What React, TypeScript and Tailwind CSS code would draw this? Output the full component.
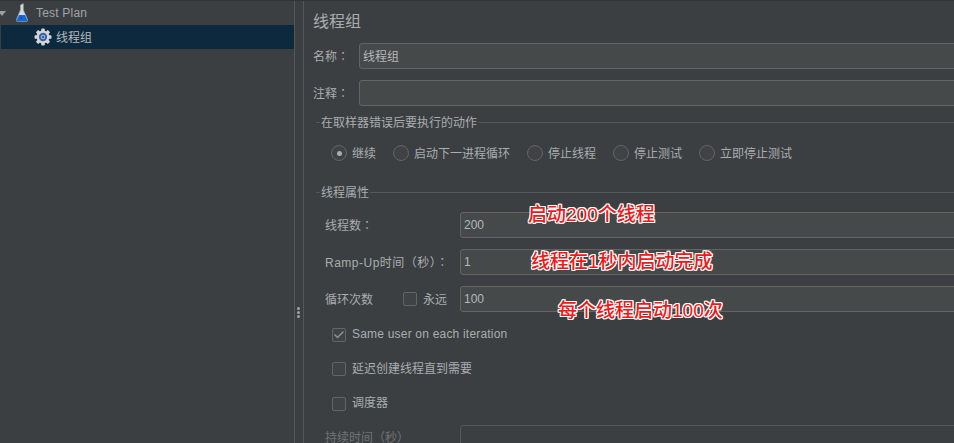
import React from "react";
import { Check } from "lucide-react";

const FONT = "font-['Liberation_Sans','Noto_Sans_CJK_SC',sans-serif]";

const FlaskIcon = () => (
  <svg width="14" height="20" viewBox="0 0 14 20" className="shrink-0">
    <path d="M5.4 2 L8.4 0.5 L8.4 7 L12.6 16.5 Q13.2 18.6 11.2 18.6 L2.8 18.6 Q0.8 18.6 1.4 16.5 L5.4 7 Z" fill="#d5dbe2" stroke="#8d96a0" strokeWidth="0.6" />
    <path d="M4 12 L10 12 L12.3 17 Q12.6 18.3 11.2 18.3 L2.8 18.3 Q1.4 18.3 1.7 17 Z" fill="#1468d8" />
    <rect x="5.6" y="14" width="1.5" height="2" fill="#0b3f8f" />
  </svg>
);

const GearIcon = () => (
  <svg width="18" height="18" viewBox="0 0 20 20" className="shrink-0">
    <g fill="#d4d6d8">
      <circle cx="10" cy="10" r="7.2" />
      <rect x="8" y="0.6" width="4" height="18.8" rx="1" />
      <rect x="0.6" y="8" width="18.8" height="4" rx="1" />
      <rect x="8" y="0.6" width="4" height="18.8" rx="1" transform="rotate(45 10 10)" />
      <rect x="8" y="0.6" width="4" height="18.8" rx="1" transform="rotate(-45 10 10)" />
    </g>
    <circle cx="10" cy="10" r="4.6" fill="#3d5f9e" />
    <circle cx="10" cy="10" r="2.6" fill="#8fb0e6" />
    <circle cx="10" cy="10" r="1.2" fill="#2c4a85" />
  </svg>
);

// the full-width colon sits in the middle of its cell in the TC face
const Colon = () => <span className="font-['Noto_Sans_CJK_TC',sans-serif]">：</span>;

const Input = ({ value, cjk }: { value?: string; cjk?: boolean }) => (
  <div className="shrink-0 w-[700px] h-[26px] bg-[#45494a] border border-[#646464] rounded-[3px] flex items-center px-[3px] text-[12px] text-[#b4b8bb]">
    <span className={cjk ? "pt-[1px]" : ""}>{value}</span>
  </div>
);

const Radio = ({ label, checked, className }: { label: string; checked?: boolean; className: string }) => (
  <div className={`flex items-center gap-[5px] ${className}`}>
    <span className="w-[16px] h-[16px] rounded-full border border-[#646464] bg-[#3f4345] flex items-center justify-center">
      {checked && <span className="w-[5px] h-[5px] rounded-full bg-[#a9adb0]" />}
    </span>
    <span className="pt-[1px]">{label}</span>
  </div>
);

const CheckBox = ({ checked }: { checked?: boolean }) => (
  <span className="w-[14px] h-[14px] shrink-0 rounded-[2px] border border-[#646464] bg-[#3f4345] flex items-center justify-center">
    {checked && <Check className="w-[12px] h-[12px] text-[#8f9396]" strokeWidth={3} />}
  </span>
);

const GroupTitle = ({ title }: { title: string }) => (
  <div className="flex items-center pl-[3px] h-[16px]">
    <span className="border-t border-[#55585a] w-[4px]" />
    <span className="px-[1px] pt-[1px] h-[16px] leading-[16px]">{title}</span>
    <span className="flex-1 border-t border-[#55585a]" />
  </div>
);

const Note = ({ text, className }: { text: string; className: string }) => (
  <span className={`absolute font-['Liberation_Sans','Noto_Sans_CJK_SC',sans-serif] font-medium text-[19px] leading-none whitespace-nowrap text-[#f01818] [text-shadow:1px_0_0_#fff,-1px_0_0_#fff,0_1px_0_#fff,0_-1px_0_#fff,1px_1px_0_#fff,-1px_-1px_0_#fff,1px_-1px_0_#fff,-1px_1px_0_#fff] ${className}`}>
    {text}
  </span>
);

export default function App() {
  return (
    <div className={`relative w-[954px] h-[443px] overflow-hidden flex bg-[#3c3f41] border-t border-[#323537] text-[12px] text-[#a9adb0] ${FONT}`}>
      {/* Tree */}
      <div className="w-[295px] shrink-0 border-r border-[#55585a]">
        <div className="flex items-center h-[24px] -ml-[2px]">
          <span className="w-0 h-0 border-x-[4px] border-x-transparent border-t-[5px] border-t-[#9a9ea1]" />
          <span className="ml-[9px]"><FlaskIcon /></span>
          <span className="ml-[7px] text-[#9fa5aa] tracking-[0.2px]">Test Plan</span>
        </div>
        <div className="flex items-center h-[24px] ml-[1px] bg-[#0d293e] pl-[33px] gap-[4px] text-[#b4b8bb]">
          <GearIcon />
          <span className="pt-[1px]">线程组</span>
        </div>
      </div>

      {/* Splitter */}
      <div className="relative w-[8px] shrink-0">
        <div className="absolute left-[2px] top-[306px] flex flex-col gap-[1px]">
          <span className="w-[3px] h-[3px] rounded-full bg-[#a0a4a7]" />
          <span className="w-[3px] h-[3px] rounded-full bg-[#a0a4a7]" />
          <span className="w-[3px] h-[3px] rounded-full bg-[#a0a4a7]" />
        </div>
      </div>

      {/* Form */}
      <div className="flex-1 min-w-0 overflow-hidden border-l border-[#55585a] pl-[9px]">
        <div className="h-[42px] pt-[11px] text-[16px] leading-[20px] text-[#a9adb0]">线程组</div>
        <div className="flex items-center">
          <span className="w-[46px] shrink-0 pt-[1px]">名称<Colon /></span>
          <Input value="线程组" cjk />
        </div>
        <div className="flex items-center mt-[11px]">
          <span className="w-[46px] shrink-0 pt-[1px]">注释<Colon /></span>
          <Input />
        </div>
        <div className="mt-[8px]">
          <GroupTitle title="在取样器错误后要执行的动作" />
        </div>
        <div className="flex items-center h-[18px] mt-[14px] pl-[18px]">
          <Radio label="继续" checked className="w-[62px]" />
          <Radio label="启动下一进程循环" className="w-[134px]" />
          <Radio label="停止线程" className="w-[86px]" />
          <Radio label="停止测试" className="w-[86px]" />
          <Radio label="立即停止测试" className="" />
        </div>
        <div className="mt-[22px]">
          <GroupTitle title="线程属性" />
        </div>
        <div className="flex items-center mt-[12px] pl-[12px]">
          <span className="w-[135px] shrink-0 pt-[1px]">线程数<Colon /></span>
          <Input value="200" />
        </div>
        <div className="flex items-center mt-[11px] pl-[12px]">
          <span className="w-[135px] shrink-0 pt-[1px] tracking-[0.5px] whitespace-nowrap">Ramp-Up时间（秒）<Colon /></span>
          <Input value="1" />
        </div>
        <div className="flex items-center mt-[11px] pl-[12px]">
          <span className="w-[78px] shrink-0 pt-[2px]">循环次数</span>
          <CheckBox />
          <span className="w-[43px] shrink-0 pl-[6px] pt-[1px]">永远</span>
          <Input value="100" />
        </div>
        <div className="flex items-center gap-[6px] h-[14px] mt-[16px] pl-[19px] tracking-[0.2px]">
          <CheckBox checked />
          <span className="pb-[2px]">Same user on each iteration</span>
        </div>
        <div className="flex items-center gap-[6px] h-[14px] mt-[20px] pl-[19px]">
          <CheckBox />
          <span>延迟创建线程直到需要</span>
        </div>
        <div className="flex items-center gap-[6px] h-[14px] mt-[21px] pl-[19px]">
          <CheckBox />
          <span className="pb-[2px]">调度器</span>
        </div>
        <div className="flex items-start mt-[14px] pl-[12px] text-[#6f7376]">
          <span className="w-[135px] shrink-0 whitespace-nowrap pt-[7px] leading-[12px]">持续时间（秒）</span>
          <div className="shrink-0 w-[700px] h-[26px] border border-[#55585a] rounded-[3px]" />
        </div>
      </div>

      <Note text="启动200个线程" className="left-[528px] top-[204px]" />
      <Note text="线程在1秒内启动完成" className="left-[531px] top-[251px]" />
      <Note text="每个线程启动100次" className="left-[558px] top-[300px]" />
    </div>
  );
}
